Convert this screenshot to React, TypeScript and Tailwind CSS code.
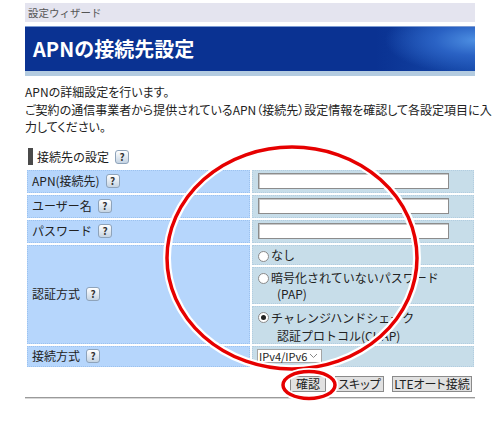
import React from "react";

const Q = () => (
  <span className="ml-[6px] inline-flex h-[14px] w-[14px] items-center justify-center rounded-[3px] border border-[#8ea3ba] bg-linear-to-b from-white to-[#c5d4e3] text-[10px] font-bold leading-none text-[#333]">
    ?
  </span>
);

const Radio = ({ checked }: { checked?: boolean }) => (
  <span className="mt-[3px] inline-flex h-[11px] w-[11px] shrink-0 items-center justify-center rounded-full border border-[#8a8a8a] bg-white">
    {checked && <span className="h-[5px] w-[5px] rounded-full bg-[#222]" />}
  </span>
);

const TextInput = () => (
  <div className="h-[16px] w-[191px] border border-[#8c8c8c] bg-white shadow-[inset_1px_1px_0_#c8c8c8]" />
);

export default function App() {
  return (
    <div className="relative h-[426px] w-[500px] overflow-hidden bg-white font-['Noto_Sans_CJK_JP',sans-serif] text-[#222]">
      <div className="mx-[25px] pt-[3px]">
        <div className="flex h-[19px] items-center bg-[#e4e4ef] pl-[3px] text-[10.5px] text-[#555]">
          設定ウィザード
        </div>
        <div className="mt-[4px] h-[1px] bg-[#7d9bd2]" />
        <div className="flex h-[44px] items-center bg-[radial-gradient(90px_34px_at_100%_30%,#4d8fe2_0%,#2a62c4_45%,transparent_100%),linear-gradient(90deg,#0a3292_0%,#0a3292_78%,#1548a8_100%)] pl-[8px] text-[20px] font-bold text-white">
          APNの接続先設定
        </div>
        <div className="h-[5px] bg-[#b3cbe0]" />

        <div className="mt-[7px] text-[12px] leading-[17.5px] whitespace-nowrap [font-feature-settings:'palt']">
          <div>APNの詳細設定を行います。</div>
          <div>ご契約の通信事業者から提供されているAPN（接続先）設定情報を確認して各設定項目に入</div>
          <div>力してください。</div>
        </div>

        <div className="mt-[12px] flex h-[18px] items-center">
          <div className="ml-[3px] h-[17px] w-[5px] bg-[#4a4a4a]" />
          <span className="ml-[4px] text-[12px] text-[#1a1a1a]">接続先の設定</span>
          <Q />
        </div>
      </div>

      <div className="mx-[27px] mt-[4px] flex w-[447px] flex-col gap-[2px] text-[12px]">
        <div className="flex h-[23px] gap-[2px]">
          <div className="flex w-[223px] items-center border border-dotted border-[#9cc2ef] bg-[#b6d6fc] pl-[4px]">
            APN(接続先)
            <Q />
          </div>
          <div className="flex flex-1 items-center border border-dotted border-[#b2cde0] bg-[#c7dde9] pl-[5px]">
            <TextInput />
          </div>
        </div>
        <div className="flex h-[23px] gap-[2px]">
          <div className="flex w-[223px] items-center border border-dotted border-[#9cc2ef] bg-[#b6d6fc] pl-[4px]">
            ユーザー名
            <Q />
          </div>
          <div className="flex flex-1 items-center border border-dotted border-[#b2cde0] bg-[#c7dde9] pl-[5px]">
            <TextInput />
          </div>
        </div>
        <div className="flex h-[23px] gap-[2px]">
          <div className="flex w-[223px] items-center border border-dotted border-[#9cc2ef] bg-[#b6d6fc] pl-[4px]">
            パスワード
            <Q />
          </div>
          <div className="flex flex-1 items-center border border-dotted border-[#b2cde0] bg-[#c7dde9] pl-[5px]">
            <TextInput />
          </div>
        </div>
        <div className="flex h-[99px] gap-[2px]">
          <div className="flex w-[223px] items-center border border-dotted border-[#9cc2ef] bg-[#b6d6fc] pl-[4px]">
            認証方式
            <Q />
          </div>
          <div className="flex flex-1 flex-col gap-[2px]">
            <div className="flex h-[20px] items-center gap-[2px] border border-dotted border-[#b2cde0] bg-[#c7dde9] pl-[5px]">
              <Radio />
              <span className="leading-[16px]">なし</span>
            </div>
            <div className="flex h-[37px] items-start gap-[2px] border border-dotted border-[#b2cde0] bg-[#c7dde9] pl-[5px] pt-[2px]">
              <Radio />
              <div className="leading-[16px]">
                <div>暗号化されていないパスワード</div>
                <div className="pl-[6px]">(PAP)</div>
              </div>
            </div>
            <div className="flex h-[38px] items-start gap-[2px] border border-dotted border-[#b2cde0] bg-[#c7dde9] pl-[5px] pt-[2px]">
              <Radio checked />
              <div className="leading-[18px]">
                <div>チャレンジハンドシェーク</div>
                <div className="pl-[6px]">認証プロトコル(CHAP)</div>
              </div>
            </div>
          </div>
        </div>
        <div className="flex h-[21px] gap-[2px]">
          <div className="flex w-[223px] items-center border border-dotted border-[#9cc2ef] bg-[#b6d6fc] pl-[4px]">
            接続方式
            <Q />
          </div>
          <div className="flex flex-1 items-center border border-dotted border-[#b2cde0] bg-[#c7dde9] pl-[4px]">
            <div className="flex h-[14px] w-[65px] items-center justify-between border border-[#a5a5a5] bg-white pl-[1px] pr-[3px] text-[11px] leading-none">
              <span>IPv4/IPv6</span>
              <svg width="9" height="6" viewBox="0 0 9 6">
                <polyline points="1,1 4.5,4.5 8,1" fill="none" stroke="#888" strokeWidth="1" />
              </svg>
            </div>
          </div>
        </div>
      </div>

      <div className="mx-[25px] mt-[9px] flex justify-end pr-[3px] text-[12px] whitespace-nowrap [font-feature-settings:'palt']">
        <button className="flex h-[16px] w-[36px] items-center justify-center border border-[#8a8a8a] bg-[#e1e1e1] leading-none">
          確認
        </button>
        <button className="ml-[9px] flex h-[16px] w-[49px] items-center justify-center border border-[#8a8a8a] bg-[#e1e1e1] leading-none">
          スキップ
        </button>
        <button className="ml-[8px] flex h-[16px] w-[80px] items-center justify-center border border-[#8a8a8a] bg-[#e1e1e1] leading-none">
          LTEオート接続
        </button>
      </div>

      <div className="mx-[25px] mt-[5px] h-[1px] bg-[#9a9a9a]" />
      <div className="mx-[25px] h-[1px] bg-[#d8d8d8]" />

      <svg className="pointer-events-none absolute inset-0" width="500" height="426" viewBox="0 0 500 426">
        <ellipse cx="292" cy="258" rx="125" ry="111" fill="none" stroke="#fff" strokeWidth="8" />
        <ellipse cx="292" cy="258" rx="125" ry="111" fill="none" stroke="#e60000" strokeWidth="3.5" />
        <ellipse cx="309" cy="385" rx="26" ry="13.5" fill="none" stroke="#fff" strokeWidth="7" />
        <ellipse cx="309" cy="385" rx="26" ry="13.5" fill="none" stroke="#e60000" strokeWidth="3.5" />
      </svg>
    </div>
  );
}
